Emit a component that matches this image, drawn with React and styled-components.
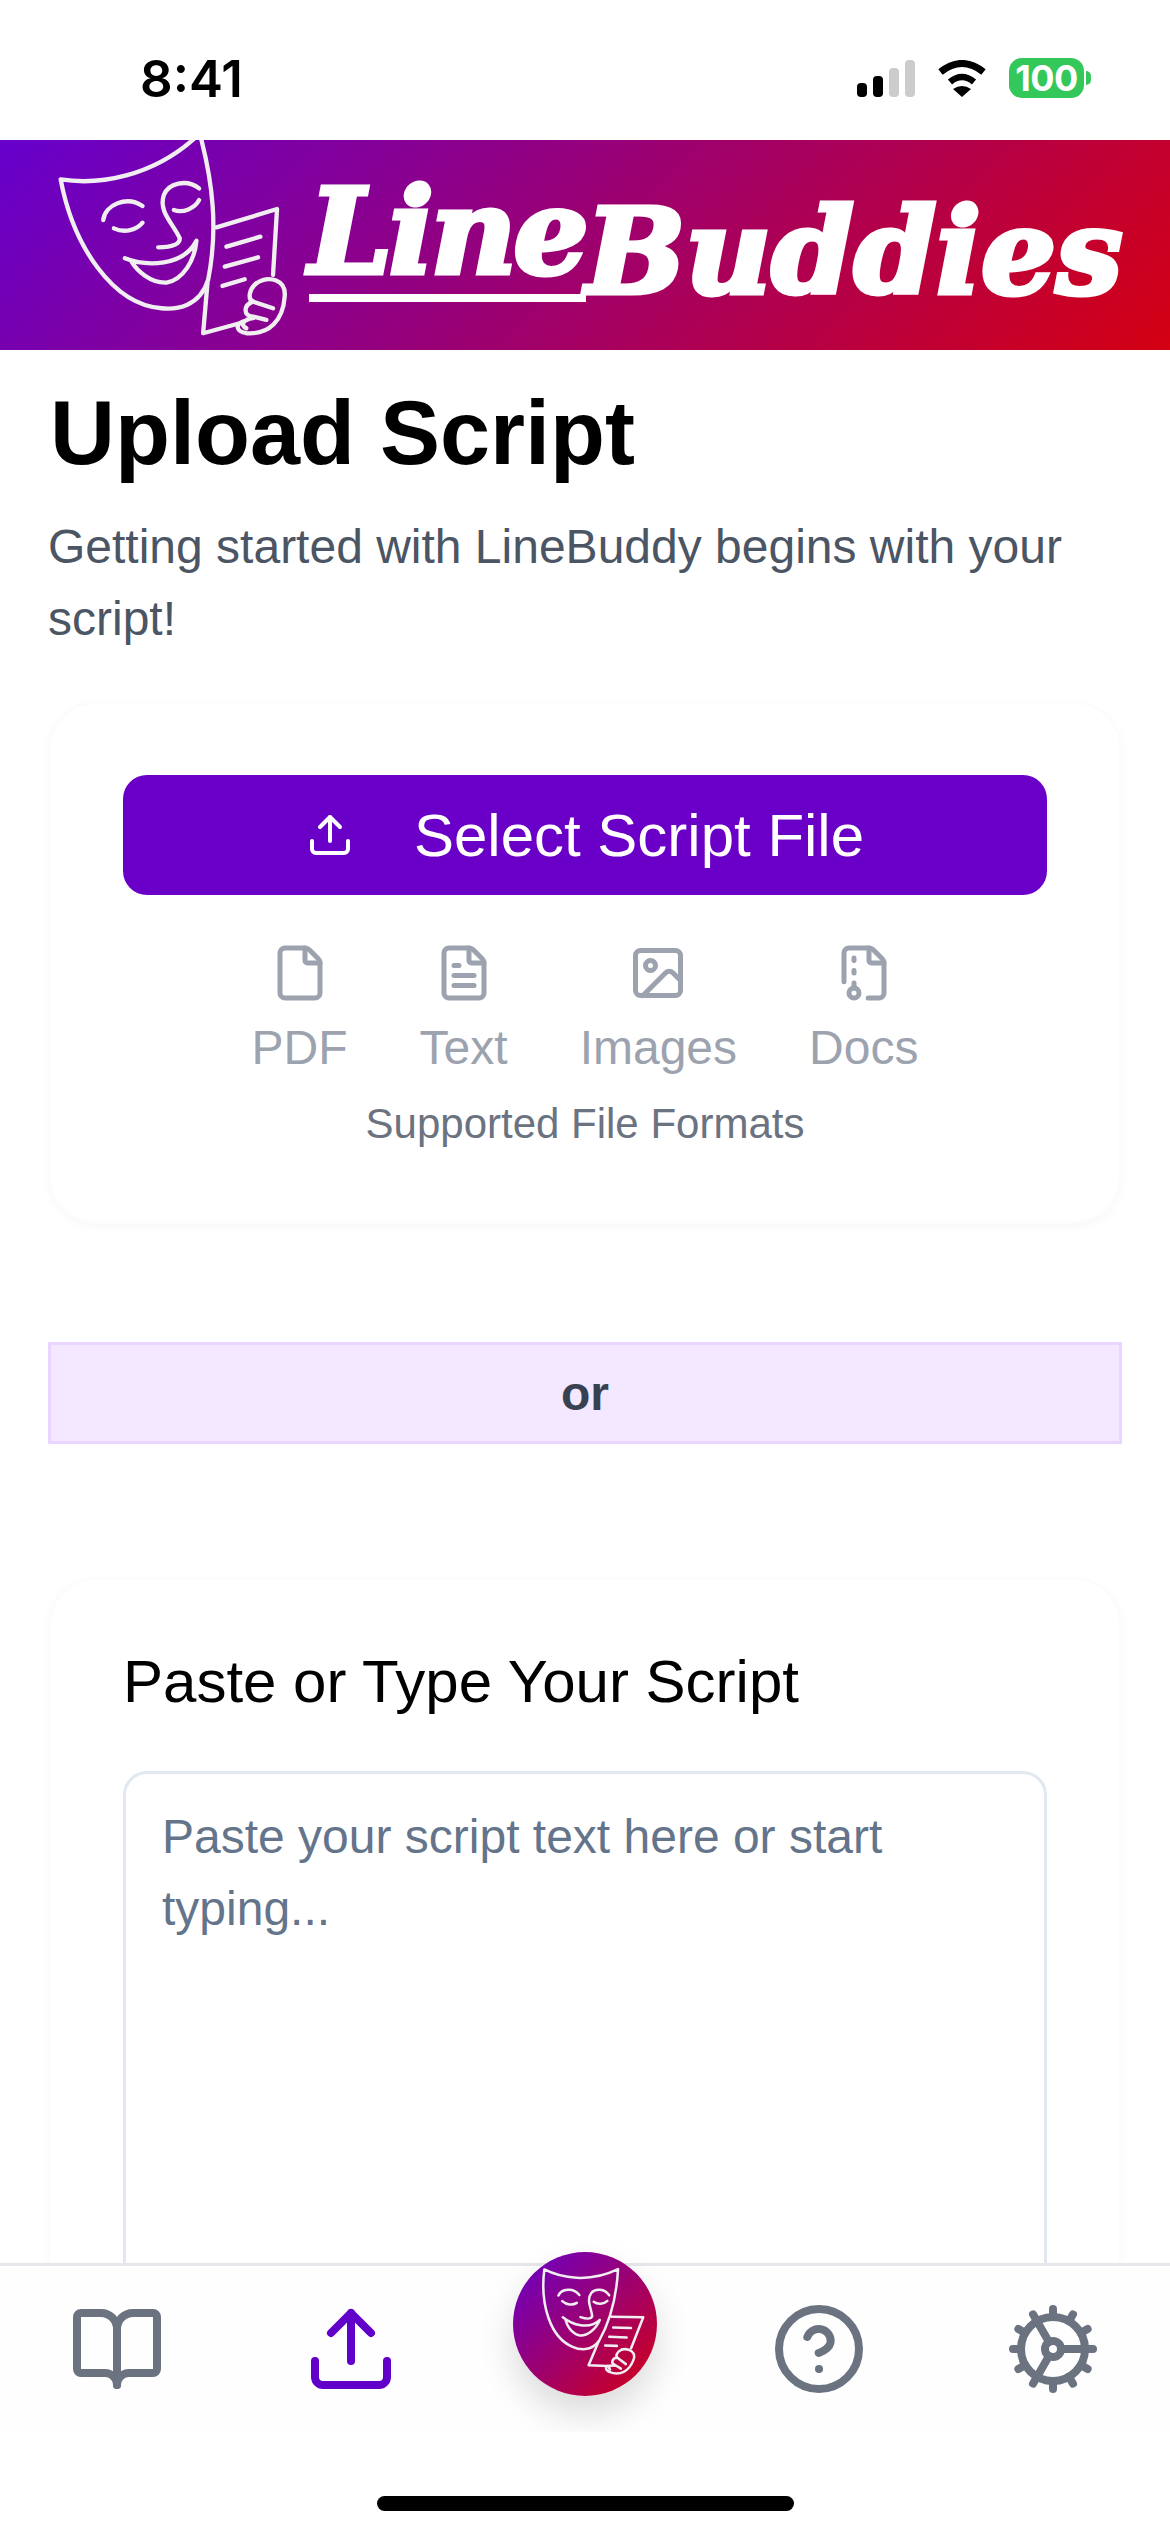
import React from "react";
import styled, { createGlobalStyle } from "styled-components";
import { BookOpen, CircleHelp, Cog, File, FileArchive, FileText, Image, Upload } from "lucide-react";

const GlobalStyle = createGlobalStyle`
  html, body {
    margin: 0;
    padding: 0;
    height: 100%;
    overflow: hidden;
    background: #fff;
    font-family: "Liberation Sans", Arial, sans-serif;
  }
  * { box-sizing: border-box; }
`;

const brandGradient = "linear-gradient(135deg, #6600cc, #d40012)";

const Page = styled.div`
  display: flex;
  flex-direction: column;
  height: 2532px;
  overflow: hidden;
`;

const StatusBar = styled.div`
  flex: none;
  height: 140px;
  display: flex;
  align-items: center;
  justify-content: space-between;
  padding: 16px 86px 0 140px;
`;
const Clock = styled.div`
  font-family: Inter, sans-serif;
  font-size: 51px;
  font-weight: 600;
  color: #000;
`;
const StatusIcons = styled.div`
  display: flex;
  align-items: center;
  gap: 22px;
`;
const SignalBars = styled.div`
  display: flex;
  align-items: flex-end;
  gap: 6px;
  height: 37px;
`;
const SignalBar = styled.div`
  width: 10px;
  height: ${(p) => p.$h}px;
  border-radius: 4px;
  background: ${(p) => (p.$on ? "#000" : "#cccccc")};
`;
const Battery = styled.div`
  position: relative;
  width: 75px;
  height: 40px;
  border-radius: 13px;
  background: #34c759;
  color: #fff;
  font-family: Inter, sans-serif;
  font-size: 36px;
  font-weight: 700;
  line-height: 40px;
  text-align: center;
  letter-spacing: -0.5px;

  &::after {
    content: "";
    position: absolute;
    left: 77px;
    top: 13px;
    width: 5px;
    height: 14px;
    border-radius: 0 7px 7px 0;
    background: #34c759;
  }
`;

const Banner = styled.header`
  flex: none;
  height: 210px;
  display: flex;
  padding-left: 40px;
  background: ${brandGradient};
  overflow: hidden;
`;
const BannerMask = styled.svg`
  flex: none;
  width: 253px;
  height: 210px;
`;
const Wordmark = styled.div`
  display: flex;
  align-items: flex-end;
  height: 162px;
  margin-left: 16px;
  font-family: "DejaVu Serif", "Liberation Serif", serif;
  font-size: 118px;
  font-style: italic;
  font-weight: 700;
  color: #fff;
  -webkit-text-stroke: 5px #fff;
`;
const WordLine = styled.div`
  height: 118px;
  line-height: 96px;
  letter-spacing: -3px;
  border-bottom: 8px solid #fff;
`;
const WordBuddies = styled.div`
  line-height: 100px;
`;

const Main = styled.main`
  flex: 1;
  min-height: 0;
  overflow: hidden;
  padding: 29px 48px 0;
`;
const Title = styled.h1`
  margin: 0 0 0 2px;
  font-size: 90px;
  line-height: 108px;
  font-weight: 700;
  color: #000;
`;
const Intro = styled.p`
  margin: 24px 0 46px;
  font-size: 48px;
  line-height: 72px;
  color: #4b5563;
`;
const Card = styled.section`
  background: #fff;
  border: 3px solid #fcfcfd;
  border-radius: 48px;
  box-shadow: 0 3px 8px rgba(0, 0, 0, 0.03);
  padding: ${(p) => p.$pad};
`;
const SelectButton = styled.button`
  width: 100%;
  height: 120px;
  display: flex;
  align-items: center;
  justify-content: center;
  gap: 60px;
  border: 0;
  border-radius: 24px;
  background: #6a00c8;
  color: #fff;
  font-family: inherit;
  font-size: 60px;
`;
const Formats = styled.div`
  display: flex;
  justify-content: center;
  gap: 72px;
  margin-top: 48px;
`;
const Format = styled.div`
  display: flex;
  flex-direction: column;
  align-items: center;
  gap: 9px;
  color: #9ca3af;
  font-size: 48px;
  line-height: 72px;
`;
const Caption = styled.div`
  margin-top: 10px;
  text-align: center;
  font-size: 42px;
  line-height: 60px;
  color: #6b7280;
`;
const OrBar = styled.div`
  height: 102px;
  margin: 118px 0 133px;
  display: flex;
  align-items: center;
  justify-content: center;
  background: #f3e8ff;
  border: 3px solid #e9d5ff;
  color: #374151;
  font-size: 48px;
  font-weight: 700;
`;
const PasteTitle = styled.h2`
  margin: 0 0 47px;
  font-size: 60px;
  line-height: 84px;
  font-weight: 400;
  color: #000;
`;
const ScriptInput = styled.textarea`
  display: block;
  width: 100%;
  height: 900px;
  padding: 27px 36px;
  resize: none;
  border: 3px solid #e2e8f0;
  border-radius: 24px;
  font-family: inherit;
  font-size: 48px;
  line-height: 72px;
  outline: none;

  &::placeholder {
    color: #64748b;
    opacity: 1;
  }
`;

const Footer = styled.footer`
  flex: none;
  height: 269px;
  position: relative;
  background: #fff;
  border-top: 3px solid #e5e7eb;
`;
const NavBar = styled.nav`
  display: grid;
  grid-template-columns: repeat(5, 1fr);
  height: 166px;
  background: #fefefe;
  clip-path: inset(-40px 0 0 0);
`;
const NavItem = styled.div`
  position: relative;
  display: flex;
  align-items: center;
  justify-content: center;
  color: ${(p) => (p.$active ? "#6100c9" : "#6b7280")};
`;
const Fab = styled.div`
  position: absolute;
  left: 45px;
  top: -14px;
  width: 144px;
  height: 144px;
  border-radius: 50%;
  background: ${brandGradient};
  box-shadow: 0 18px 36px rgba(0, 0, 0, 0.14);
`;
const FabMask = styled.svg`
  display: block;
  width: 144px;
  height: 144px;
`;
const HomeIndicator = styled.div`
  width: 417px;
  height: 15px;
  margin: 64px auto 0;
  border-radius: 8px;
  background: #000;
`;

const MaskArt = ({ weight }) => (
  <g fill="none" stroke="#f1eef2" strokeWidth={weight} strokeLinecap="round" strokeLinejoin="round">
    <path d="M62 178 C170 195 340 175 480 40 C520 190 535 330 505 480 C480 560 410 570 365 565 C220 555 100 380 62 178 Z" />
    <path d="M190 300 C195 255 260 225 308 258" />
    <path d="M222 325 C255 340 290 330 308 308" />
    <path d="M478 205 C440 175 385 190 372 225 C355 275 400 310 420 355 C420 378 380 382 355 382" />
    <path d="M402 270 C430 280 465 265 478 240" />
    <path d="M255 415 C320 440 430 440 470 362 C465 420 430 480 380 488 C330 490 290 450 275 425" />
    <path d="M530 322 L712 267 L700 465" />
    <path d="M503 490 L490 640 L600 610" />
    <path d="M560 380 L662 350" />
    <path d="M555 440 L655 412" />
    <path d="M548 498 L615 478" />
    <path d="M650 490 C690 465 740 480 735 530 C730 600 690 645 620 640 C590 635 585 615 610 605" />
    <path d="M650 490 C625 510 625 540 640 545 L700 565" />
    <path d="M640 545 C610 555 610 590 640 590 L680 600" />
    <path d="M640 595 C610 600 600 615 620 625" />
  </g>
);

const App = () => (
  <Page>
    <GlobalStyle />
    <StatusBar>
      <Clock>8:41</Clock>
      <StatusIcons>
        <SignalBars>
          <SignalBar $on $h={14} />
          <SignalBar $on $h={21} />
          <SignalBar $h={29} />
          <SignalBar $h={37} />
        </SignalBars>
        <svg width="50" height="37" viewBox="0 0 50 37">
          <path d="M3.5 12 Q25 -5 46.500 12" fill="none" stroke="#000" strokeWidth="7" />
          <path d="M13 22 Q25 12 37 22" fill="none" stroke="#000" strokeWidth="6.500" />
          <path d="M25 37 L16 29 Q25 23 34 29 Z" fill="#000" />
        </svg>
        <Battery>100</Battery>
      </StatusIcons>
    </StatusBar>

    <Banner>
      <BannerMask viewBox="0 60 760 630">
        <MaskArt weight={13} />
      </BannerMask>
      <Wordmark>
        <WordLine>Line</WordLine>
        <WordBuddies>Buddies</WordBuddies>
      </Wordmark>
    </Banner>

    <Main>
      <Title>Upload Script</Title>
      <Intro>Getting started with LineBuddy begins with your script!</Intro>

      <Card $pad="71px 72px 67px">
        <SelectButton>
          <Upload size={48} strokeWidth={2} />
          Select Script File
        </SelectButton>
        <Formats>
          <Format><File size={60} />PDF</Format>
          <Format><FileText size={60} />Text</Format>
          <Format><Image size={60} />Images</Format>
          <Format><FileArchive size={60} />Docs</Format>
        </Formats>
        <Caption>Supported File Formats</Caption>
      </Card>

      <OrBar>or</OrBar>

      <Card $pad="60px 72px 72px">
        <PasteTitle>Paste or Type Your Script</PasteTitle>
        <ScriptInput placeholder="Paste your script text here or start typing..." />
      </Card>
    </Main>

    <Footer>
      <NavBar>
        <NavItem><BookOpen size={96} /></NavItem>
        <NavItem $active><Upload size={96} /></NavItem>
        <NavItem>
          <Fab>
            <FabMask viewBox="-40 -20 860 860">
              <g transform="rotate(18 400 400)">
                <MaskArt weight={15} />
              </g>
            </FabMask>
          </Fab>
        </NavItem>
        <NavItem><CircleHelp size={96} /></NavItem>
        <NavItem><Cog size={96} /></NavItem>
      </NavBar>
      <HomeIndicator />
    </Footer>
  </Page>
);

export default App;
